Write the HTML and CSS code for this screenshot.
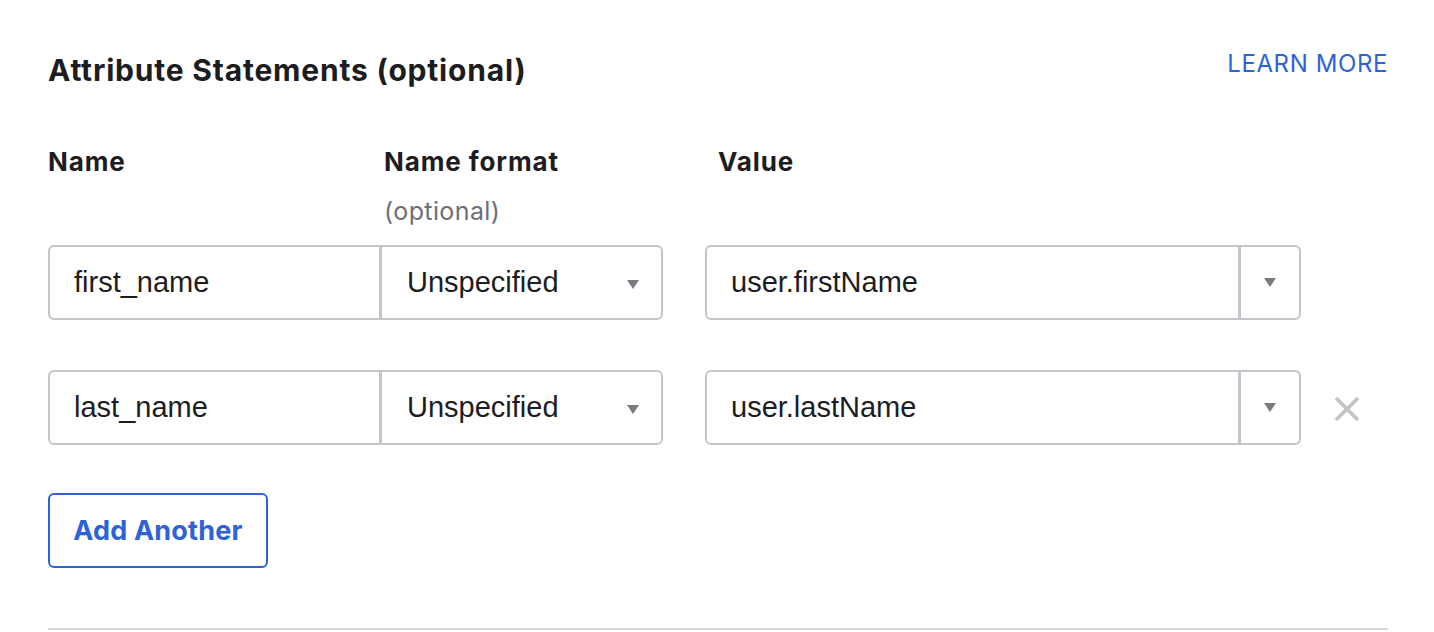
FILE: index.html
```html
<!DOCTYPE html>
<html lang="en">
<head>
    <meta charset="UTF-8">
    <meta name="viewport" content="width=device-width, initial-scale=1.0">
    <title>Attribute Statements</title>
    <link rel="stylesheet" href="styles.css">
</head>
<body>
    <div class="section">
        <div class="sectionHead">
            <h2>Attribute Statements (optional)</h2>
            <a href="#" class="learnMore">LEARN MORE</a>
        </div>

        <div class="labels">
            <div class="labelName">Name</div>
            <div class="labelFormat">Name format<span class="optional">(optional)</span></div>
            <div class="labelValue">Value</div>
        </div>

        <div class="row">
            <div class="pair">
                <div class="nameInput">first_name</div>
                <div class="formatSelect">Unspecified<span class="arrow"></span></div>
            </div>
            <div class="valueBox">
                <div class="valueText">user.firstName</div>
                <div class="valueToggle"><span class="arrow"></span></div>
            </div>
        </div>

        <div class="row">
            <div class="pair">
                <div class="nameInput">last_name</div>
                <div class="formatSelect">Unspecified<span class="arrow"></span></div>
            </div>
            <div class="valueBox">
                <div class="valueText">user.lastName</div>
                <div class="valueToggle"><span class="arrow"></span></div>
            </div>
            <button class="remove" aria-label="Remove">
                <svg width="26" height="26" viewBox="0 0 26 26">
                    <path d="M2 2 L24 24 M24 2 L2 24" stroke="#c3c3c8" stroke-width="3.8" fill="none"/>
                </svg>
            </button>
        </div>

        <button class="addAnother">Add Another</button>
    </div>
    <hr class="divider">
</body>
</html>
```

FILE: styles.css
```css
html, body {
    margin: 0;
    padding: 0;
    background-color: #ffffff;
}
body {
    padding: 0 46px 0 48px;
    font-family: Inter, "Noto Sans", sans-serif;
    color: #1d1d21;
}
.sectionHead {
    display: flex;
    justify-content: space-between;
    align-items: flex-start;
    padding-top: 50px;
}
.sectionHead h2 {
    margin: 0;
    font-size: 30px;
    font-weight: 700;
    line-height: 40px;
    letter-spacing: 0.8px;
}
.learnMore {
    font-size: 24px;
    line-height: 28px;
    color: #2e62d9;
    text-decoration: none;
    letter-spacing: 0.6px;
}
.labels {
    display: flex;
    margin-top: 57px;
    font-size: 26px;
    font-weight: 700;
    line-height: 30px;
    letter-spacing: 0.9px;
}
.labelName {
    width: 332px;
}
.labelFormat {
    width: 283px;
    padding-left: 4px;
    box-sizing: border-box;
}
.optional {
    display: block;
    margin-top: 19px;
    font-size: 25px;
    font-weight: 400;
    letter-spacing: 0.4px;
    color: #6e6e78;
}
.labelValue {
    margin-left: 42px;
    padding-left: 13px;
}
.row {
    display: flex;
    align-items: center;
    margin-top: 19px;
}
.row + .row {
    margin-top: 50px;
}
.pair {
    display: flex;
    width: 615px;
    height: 75px;
}
.nameInput, .formatSelect, .valueText {
    display: flex;
    align-items: center;
    box-sizing: border-box;
    height: 75px;
    font-family: "Liberation Sans", Arial, sans-serif;
    font-size: 29px;
    color: #1d1d21;
}
.nameInput {
    width: 332px;
    padding-left: 24px;
    border: 2px solid #c4c4ca;
    border-right: 1px solid #c4c4ca;
    border-radius: 6px 0 0 6px;
}
.formatSelect {
    position: relative;
    width: 283px;
    padding-left: 25px;
    border: 2px solid #c4c4ca;
    border-radius: 0 6px 6px 0;
}
.formatSelect .arrow {
    position: absolute;
    right: 22px;
    top: 33px;
}
.arrow {
    display: block;
    width: 0;
    height: 0;
    border-left: 6px solid transparent;
    border-right: 6px solid transparent;
    border-top: 9px solid #7a7a80;
}
.valueBox {
    display: flex;
    margin-left: 42px;
    width: 596px;
    height: 75px;
    box-sizing: border-box;
    border: 2px solid #c4c4ca;
    border-radius: 6px;
}
.valueText {
    flex: 1;
    height: 71px;
    padding-left: 24px;
    border-right: 3px solid #c4c4ca;
}
.valueToggle {
    width: 58px;
    display: flex;
    align-items: center;
    justify-content: center;
}
.remove {
    margin-left: 33px;
    padding: 0;
    border: none;
    background: none;
    width: 26px;
    height: 26px;
    display: flex;
    margin-top: 2px;
}
.addAnother {
    display: block;
    margin-top: 48px;
    width: 220px;
    height: 75px;
    border: 2px solid #2e62d9;
    border-radius: 6px;
    background-color: #ffffff;
    color: #2e62d9;
    font-family: Inter, "Noto Sans", sans-serif;
    font-size: 27px;
    font-weight: 700;
    letter-spacing: 0.2px;
}
.divider {
    margin: 60px 0 0 0;
    border: none;
    border-top: 2px solid #d6d6db;
}
```
